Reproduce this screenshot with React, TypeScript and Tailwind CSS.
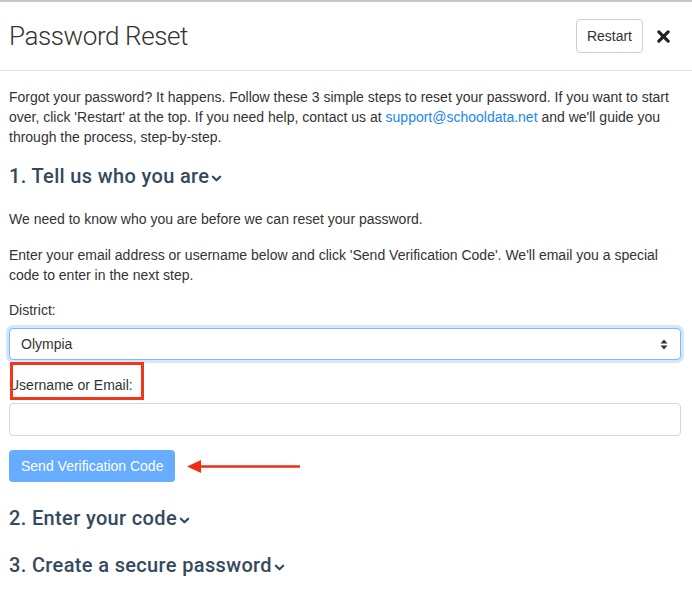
import React from 'react';

const Chevron: React.FC = () => (
  <svg className="ml-[2px] inline-block h-[9px] w-[11px] align-baseline" viewBox="0 0 12 9" fill="none">
    <path d="M2 2.5l4 4 4-4" stroke="#34495e" strokeWidth={2.4} strokeLinecap="round" strokeLinejoin="round" />
  </svg>
);

const StepHeading: React.FC<{ title: string; className?: string }> = ({ title, className = '' }) => (
  <h3 className={`font-['Roboto',sans-serif] text-[20px] leading-[24px] font-medium tracking-[0.35px] text-[#34495e] ${className}`}>
    {title}
    <Chevron />
  </h3>
);

export default function App() {
  return (
    <div className="min-h-[590px] w-[692px] bg-white font-['Liberation_Sans',Arial,sans-serif] text-[#333] border-t-2 border-[#c4c6c9]">
      {/* Header */}
      <div className="flex h-[69px] items-center justify-between border-b border-[#e2e4e7] pl-[9px] pr-[22px]">
        <h1 className="font-['Roboto',sans-serif] text-[26px] font-light leading-none tracking-[-0.4px] text-[#333]">Password Reset</h1>
        <div className="flex items-center gap-[14px]">
          <button className="h-[34px] rounded-[4px] border border-[#ccd0d5] bg-white px-[10px] text-[14px] text-[#333]">
            Restart
          </button>
          <svg className="h-[13px] w-[13px]" viewBox="0 0 14 14">
            <path d="M2 2l10 10M12 2L2 12" stroke="#222" strokeWidth={3.4} strokeLinecap="round" />
          </svg>
        </div>
      </div>

      {/* Body */}
      <div className="px-[9px] pt-[16px] text-[14px] leading-[20px]">
        <p className="pr-[2px]">
          Forgot your password? It happens. Follow these 3 simple steps to reset your password. If you want to start
          over, click 'Restart' at the top. If you need help, contact us at{' '}
          <a className="text-[#1a86f5]">support@schooldata.net</a> and we'll guide you through the process, step-by-step.
        </p>

        <StepHeading title="1. Tell us who you are" className="mt-[17px]" />

        <p className="mt-[21px]">We need to know who you are before we can reset your password.</p>
        <p className="mt-[16px]">
          Enter your email address or username below and click 'Send Verification Code'. We'll email you a special
          code to enter in the next step.
        </p>

        <label className="mt-[15px] block">District:</label>
        <div className="relative mt-[8px] mr-[2px] flex h-[32px] items-center rounded-[4px] border border-[#7fb8f5] bg-white pl-[11px] shadow-[0_0_0_3px_rgba(128,189,255,0.35)]">
          <span className="text-[14px] text-[#333]">Olympia</span>
          <svg className="absolute right-[12px] top-[10px] h-[11px] w-[8px]" viewBox="0 0 8 11">
            <path d="M4 0.5L7.5 4.5H0.5Z M4 10.5L7.5 6.5H0.5Z" fill="#333" />
          </svg>
        </div>

        <div className="relative mt-[15px] h-[20px]">
          <label className="block">Username or Email:</label>
          <div className="absolute left-[1px] top-[-13px] h-[38px] w-[134px] border-[3px] border-[#f2361c]" />
        </div>
        <div className="mt-[8px] mr-[2px] h-[33px] rounded-[4px] border border-[#d3d6da] bg-white" />

        <div className="mt-[14px] flex items-center">
          <button className="h-[32px] rounded-[4px] bg-[#66acff] px-[12px] text-[14px] text-white">
            Send Verification Code
          </button>
          <svg className="ml-[11px] h-[16px] w-[116px]" viewBox="0 0 116 16">
            <path d="M14 8.5H114" stroke="#ee2d12" strokeWidth={2.6} />
            <path d="M1 8.5L15 2V15Z" fill="#ee2d12" />
          </svg>
        </div>

        <StepHeading title="2. Enter your code" className="mt-[24px]" />
        <StepHeading title="3. Create a secure password" className="mt-[23px]" />
      </div>
    </div>
  );
}
